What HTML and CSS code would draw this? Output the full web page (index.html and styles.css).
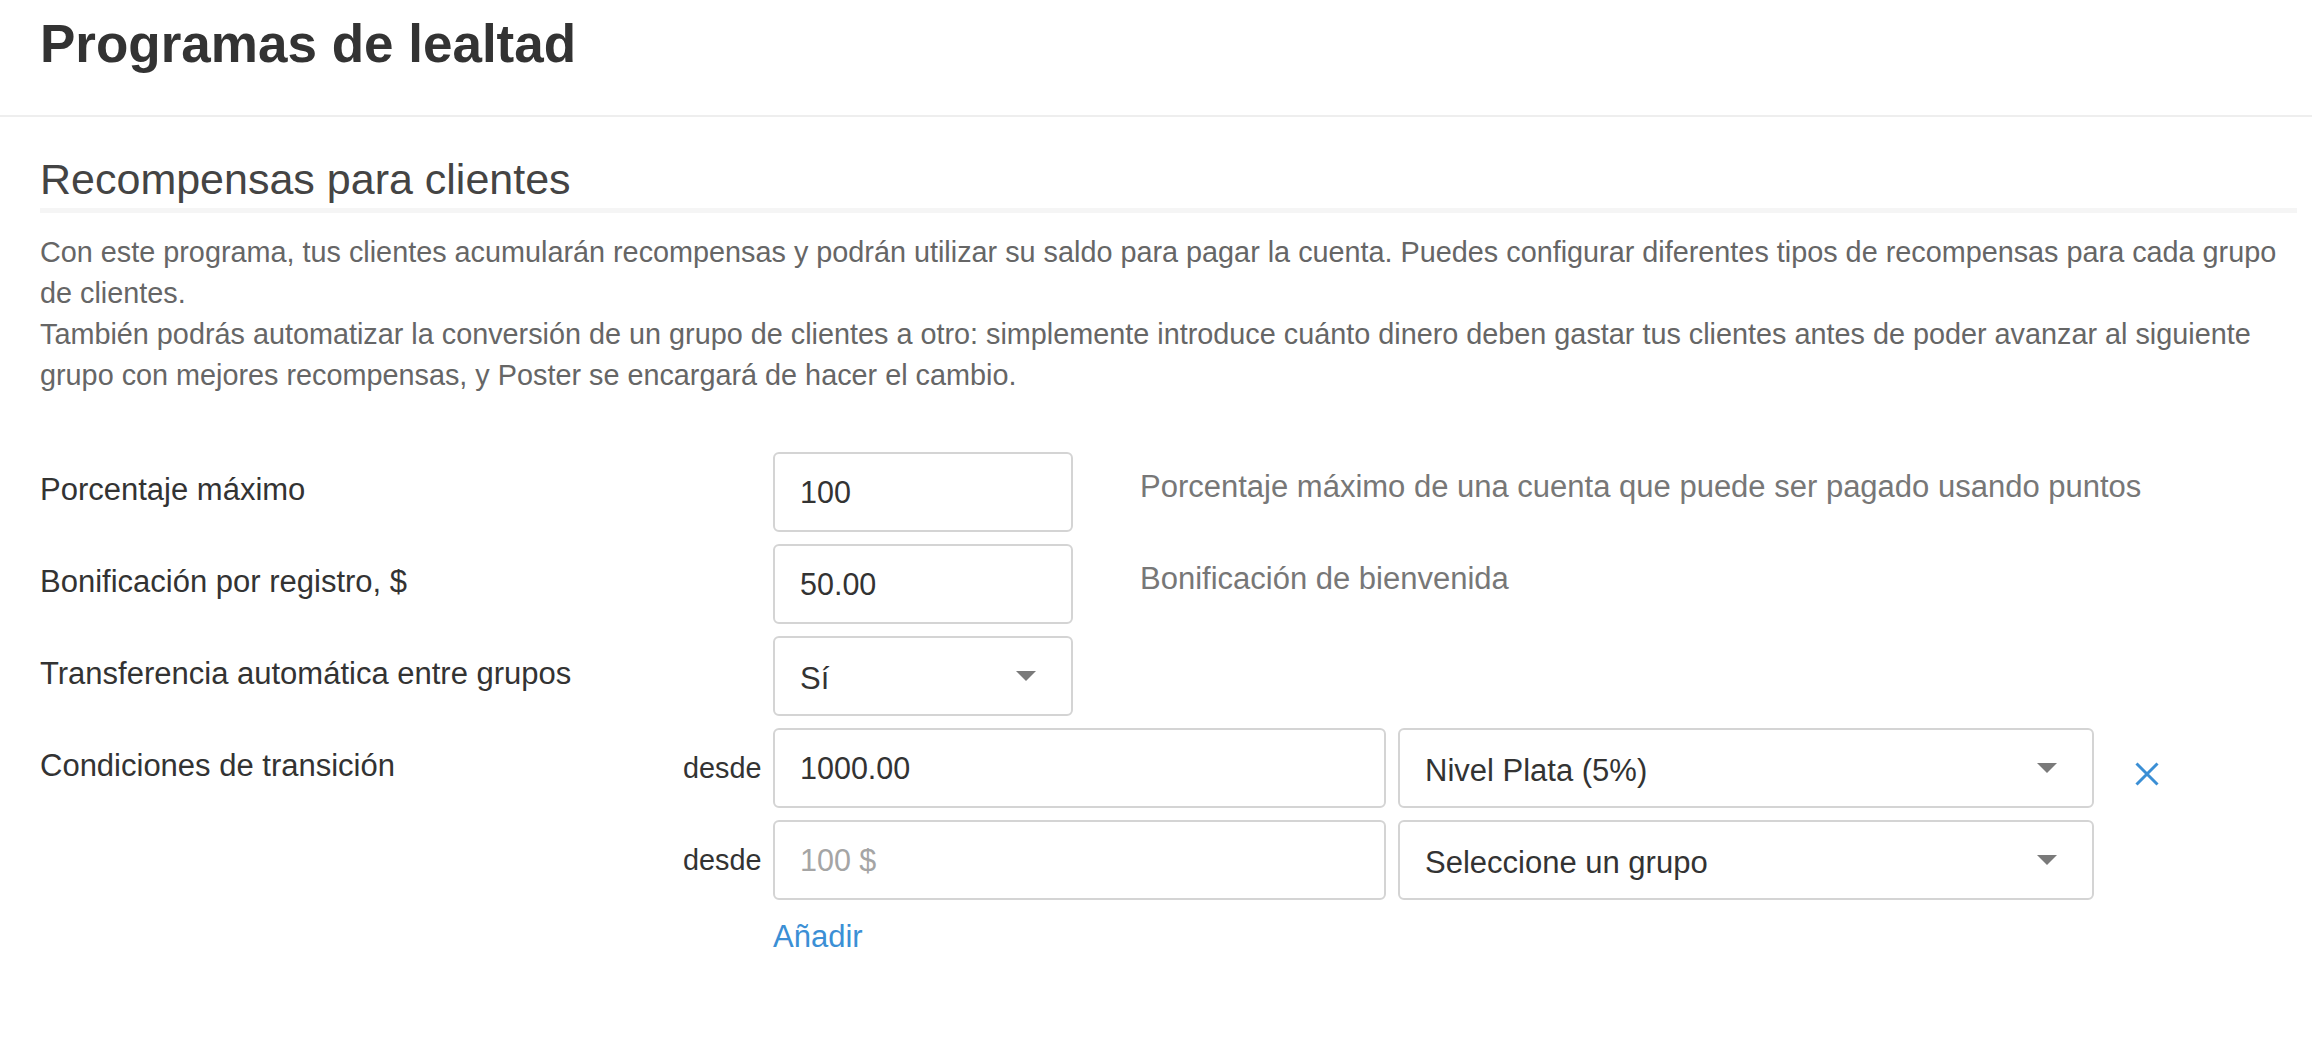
FILE: index.html
```html
<!DOCTYPE html>
<html lang="es">
<head>
  <meta charset="UTF-8">
  <meta name="viewport" content="width=device-width, initial-scale=1.0">
  <title>Programas de lealtad</title>
  <link rel="stylesheet" href="styles.css">
</head>
<body>

  <header class="page-header">
    <h1>Programas de lealtad</h1>
  </header>

  <section class="section">
    <h2 class="section-title">Recompensas para clientes</h2>
    <p class="section-text">
      Con este programa, tus clientes acumularán recompensas y podrán utilizar su saldo para pagar la cuenta. Puedes configurar diferentes tipos de recompensas para cada grupo de clientes.<br>
      También podrás automatizar la conversión de un grupo de clientes a otro: simplemente introduce cuánto dinero deben gastar tus clientes antes de poder avanzar al siguiente grupo con mejores recompensas, y Poster se encargará de hacer el cambio.
    </p>

    <div class="form">
      <div class="form-row">
        <label class="form-label">Porcentaje máximo</label>
        <input class="field field-short" type="text" value="100">
        <span class="form-hint">Porcentaje máximo de una cuenta que puede ser pagado usando puntos</span>
      </div>

      <div class="form-row">
        <label class="form-label">Bonificación por registro, $</label>
        <input class="field field-short" type="text" value="50.00">
        <span class="form-hint">Bonificación de bienvenida</span>
      </div>

      <div class="form-row">
        <label class="form-label">Transferencia automática entre grupos</label>
        <div class="field field-short select">
          <span>Sí</span>
          <svg class="caret" width="20" height="10" viewBox="0 0 20 10"><path d="M0 0h20L10 10z"/></svg>
        </div>
      </div>

      <div class="form-row">
        <label class="form-label form-label-narrow">Condiciones de transición</label>
        <div class="conditions">
          <div class="condition">
            <span class="condition-from">desde</span>
            <input class="field field-amount" type="text" value="1000.00">
            <div class="field field-group select">
              <span>Nivel Plata (5%)</span>
              <svg class="caret" width="20" height="10" viewBox="0 0 20 10"><path d="M0 0h20L10 10z"/></svg>
            </div>
            <a class="remove" href="#">
              <svg width="24" height="24" viewBox="0 0 24 24"><path d="M1.5 1.5l21 21M22.5 1.5l-21 21"/></svg>
            </a>
          </div>

          <div class="condition">
            <span class="condition-from">desde</span>
            <input class="field field-amount" type="text" placeholder="100 $">
            <div class="field field-group select">
              <span>Seleccione un grupo</span>
              <svg class="caret" width="20" height="10" viewBox="0 0 20 10"><path d="M0 0h20L10 10z"/></svg>
            </div>
          </div>

          <a class="add-link" href="#">Añadir</a>
        </div>
      </div>
    </div>
  </section>

</body>
</html>
```

FILE: styles.css
```css
body {
  margin: 0;
  font-family: "Liberation Sans", Arial, Helvetica, sans-serif;
  font-size: 28.8px;
  color: #333;
  background-color: #fff;
}
.page-header {
  padding: 15px 40px 42px;
  border-bottom: 2px solid #eeeeee;
}
.page-header h1 {
  margin: 0;
  font-size: 53px;
  line-height: 58px;
  font-weight: bold;
  color: #333;
}
.section {
  padding: 37px 15px 40px 40px;
}
.section-title {
  margin: 0;
  padding-bottom: 4px;
  font-size: 43px;
  line-height: 50px;
  font-weight: normal;
  color: #444;
  border-bottom: 5px solid #f5f5f5;
}
.section-text {
  margin: 19px 0 0;
  line-height: 41px;
  color: #666;
}
.form {
  margin-top: 56px;
}
.form-row {
  display: flex;
  align-items: flex-start;
  margin-bottom: 12px;
}
.form-label {
  width: 733px;
  flex-shrink: 0;
  padding-top: 17px;
  font-size: 31px;
  line-height: 41px;
  color: #333;
}
.form-label-narrow {
  width: 643px;
}
.form-hint {
  margin-left: 67px;
  padding-top: 14px;
  font-size: 31px;
  line-height: 41px;
  color: #777;
}
.field {
  box-sizing: border-box;
  height: 80px;
  margin: 0;
  padding: 0 25px;
  border: 2px solid #d4d4d4;
  border-radius: 6px;
  background-color: #fff;
  font-family: inherit;
  font-size: 30.5px;
  color: #333;
  outline: none;
}
.field::placeholder {
  color: #a5a5a5;
}
.field-short {
  width: 300px;
}
.field-amount {
  width: 613px;
}
.field-group {
  width: 696px;
  margin-left: 12px;
}
.select {
  display: flex;
  align-items: center;
  justify-content: space-between;
  padding-right: 35px;
  font-size: 31px;
}
.select span {
  padding-top: 5px;
}
.caret {
  fill: #7a7a7a;
}
.conditions {
  display: flex;
  flex-direction: column;
  gap: 12px;
}
.condition {
  display: flex;
  align-items: flex-start;
}
.condition-from {
  box-sizing: border-box;
  width: 90px;
  padding-right: 12px;
  text-align: right;
  line-height: 80px;
  color: #333;
}
.remove {
  display: block;
  margin: 34px 0 0 41px;
  width: 24px;
  height: 24px;
}
.remove svg {
  display: block;
  stroke: #3b8fd5;
  stroke-width: 3;
}
.add-link {
  margin: 4px 0 0 90px;
  font-size: 31px;
  line-height: 41px;
  color: #3b8fd5;
  text-decoration: none;
}
```
